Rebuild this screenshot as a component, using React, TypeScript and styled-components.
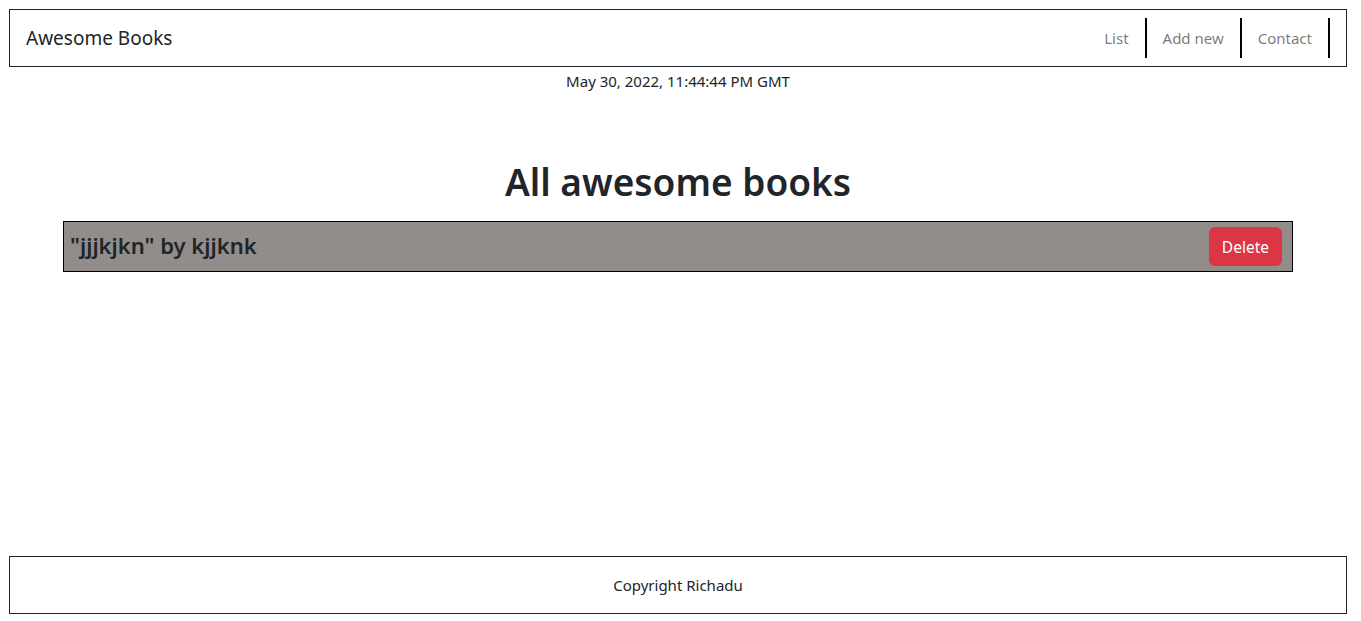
import React from "react";
import styled, { createGlobalStyle } from "styled-components";

const Global = createGlobalStyle`
  html, body { margin: 0; padding: 0; }
  body {
    font-family: "Noto Sans", "Open Sans", sans-serif;
    color: #212529;
    background: #fff;
  }
  * { box-sizing: border-box; }
`;

const Page = styled.div`
  height: 621px;
  padding: 9px 14px 7px 9px;
  display: flex;
  flex-direction: column;
`;

const Header = styled.header`
  height: 58px;
  border: 1px solid #212529;
  display: flex;
  align-items: center;
  justify-content: space-between;
  padding: 0 16px 0 16px;
`;

const Brand = styled.span`
  font-size: 19px;
  color: #212529;
`;

const Nav = styled.nav`
  display: flex;
  align-items: stretch;
  height: 40px;
`;

const NavLink = styled.a`
  display: flex;
  align-items: center;
  padding: 0 16px;
  font-size: 15px;
  color: rgba(0, 0, 0, 0.55);
  border-right: 2px solid #000;
  text-decoration: none;
`;

const DateLine = styled.p`
  margin: 4px 0 0;
  text-align: center;
  font-size: 15px;
  line-height: 20px;
`;

const Main = styled.main`
  flex: 1;
  display: flex;
  flex-direction: column;
`;

const Title = styled.h1`
  margin: 67px 0 0;
  text-align: center;
  font-size: 37px;
  font-weight: 600;
  line-height: 48px;
`;

const BookRow = styled.div`
  margin: 15px 54px 0;
  height: 51px;
  border: 1px solid #000;
  background: #928d8b;
  display: flex;
  align-items: center;
  justify-content: space-between;
  padding: 0 10px 0 6px;
`;

const BookTitle = styled.h3`
  margin: 0 0 4px;
  font-size: 22px;
  font-weight: 600;
`;

const DeleteButton = styled.button`
  background: #dc3545;
  color: #fff;
  border: none;
  border-radius: 6px;
  height: 39px;
  padding: 0 13px;
  font-family: inherit;
  font-size: 15.5px;
`;

const Footer = styled.footer`
  height: 58px;
  border: 1px solid #212529;
  display: flex;
  align-items: center;
  justify-content: center;
  font-size: 15px;
`;

export default function App() {
  return (
    <>
      <Global />
      <Page>
        <Header>
          <Brand>Awesome Books</Brand>
          <Nav>
            <NavLink>List</NavLink>
            <NavLink>Add new</NavLink>
            <NavLink>Contact</NavLink>
          </Nav>
        </Header>
        <Main>
          <DateLine>May 30, 2022, 11:44:44 PM GMT</DateLine>
          <Title>All awesome books</Title>
          <BookRow>
            <BookTitle>"jjjkjkn" by kjjknk</BookTitle>
            <DeleteButton>Delete</DeleteButton>
          </BookRow>
        </Main>
        <Footer>Copyright Richadu</Footer>
      </Page>
    </>
  );
}
